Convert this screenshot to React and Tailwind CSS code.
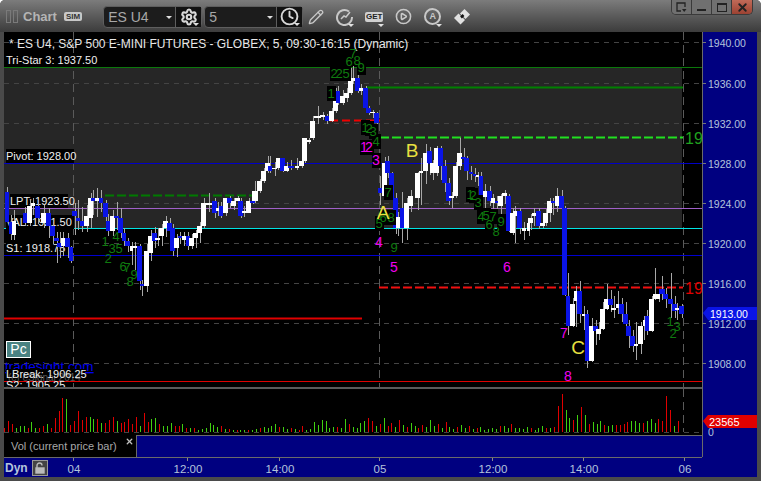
import { Pencil, Settings, Clock, CirclePlay, X } from "lucide-react";

const FONT = "font-['Liberation_Sans',Arial,sans-serif]";

// [x0, x1, top, bottom, color, wickTop, wickBottom]
const candles = [
  [5, 9, 192, 222, "b", 187, 222], [9, 12, 222, 234, "b", 215, 240], [12, 16, 221, 235, "w", 210, 240],
  [23, 27, 213, 223, "b", 207, 226], [27, 32, 206, 223, "w", 199, 226], [31, 35, 203, 206, "w", 198, 215],
  [35, 40, 206, 218, "b", 200, 224], [41, 46, 213, 223, "w", 205, 228], [46, 51, 213, 226, "b", 208, 238],
  [50, 55, 226, 236, "b", 222, 244], [54, 59, 238, 241, "b", 232, 263], [57, 62, 243, 247, "b", 232, 258],
  [61, 65, 238, 246, "w", 232, 256], [65, 70, 238, 247, "b", 233, 258], [69, 73, 247, 261, "b", 246, 263],
  [72, 77, 211, 216, "b", 203, 235], [76, 80, 218, 221, "b", 200, 230], [80, 84, 221, 226, "b", 207, 232],
  [84, 89, 216, 226, "w", 205, 232], [88, 93, 198, 218, "w", 193, 228], [91, 95, 198, 201, "b", 190, 215],
  [95, 99, 198, 201, "w", 188, 217], [99, 103, 198, 203, "b", 190, 212], [103, 108, 203, 217, "b", 200, 230],
  [106, 110, 221, 231, "b", 214, 236], [110, 115, 216, 231, "w", 210, 236], [114, 119, 216, 218, "b", 202, 230],
  [118, 123, 218, 233, "b", 208, 238], [122, 126, 233, 241, "b", 228, 246], [125, 130, 241, 246, "b", 238, 252],
  [130, 133, 246, 251, "w", 242, 265], [133, 137, 246, 248, "w", 242, 270], [137, 142, 246, 281, "b", 244, 290],
  [140, 144, 284, 286, "b", 280, 296], [144, 149, 251, 286, "w", 244, 292], [148, 153, 236, 253, "w", 230, 261],
  [152, 157, 233, 241, "b", 227, 248], [155, 160, 238, 240, "w", 228, 246], [159, 164, 228, 236, "w", 224, 246],
  [163, 168, 221, 228, "w", 216, 237], [167, 172, 223, 231, "b", 218, 240], [170, 175, 228, 251, "b", 224, 256],
  [174, 179, 238, 248, "w", 234, 257], [178, 182, 236, 238, "b", 232, 244], [182, 186, 236, 240, "w", 232, 246],
  [186, 190, 236, 246, "b", 232, 250], [189, 194, 238, 246, "w", 234, 249], [193, 198, 233, 238, "w", 230, 248],
  [197, 202, 226, 233, "w", 222, 243], [201, 206, 203, 226, "w", 198, 228], [206, 212, 203, 205, "w", 193, 212],
  [212, 217, 201, 213, "b", 198, 218], [216, 219, 208, 211, "w", 202, 216], [219, 223, 206, 216, "b", 202, 218],
  [223, 228, 198, 213, "w", 198, 216], [227, 232, 198, 203, "b", 196, 208], [231, 236, 201, 206, "w", 198, 210],
  [235, 240, 198, 201, "w", 196, 206], [238, 243, 201, 216, "b", 198, 218], [242, 246, 211, 213, "w", 206, 217],
  [246, 251, 201, 213, "w", 198, 213], [250, 255, 201, 203, "b", 198, 204], [252, 258, 191, 201, "w", 181, 203],
  [257, 262, 181, 191, "w", 179, 193], [261, 266, 171, 181, "w", 168, 183], [265, 270, 163, 171, "w", 156, 173],
  [268, 272, 166, 171, "b", 156, 173], [272, 277, 168, 169, "w", 162, 176], [276, 280, 158, 168, "w", 158, 170],
  [280, 285, 158, 171, "b", 158, 172], [284, 289, 166, 171, "w", 162, 172], [288, 294, 166, 168, "b", 160, 170],
  [295, 299, 166, 168, "w", 158, 170], [299, 304, 161, 166, "w", 158, 168], [302, 307, 138, 161, "w", 138, 163],
  [307, 311, 140, 142, "w", 138, 144], [310, 315, 121, 138, "w", 116, 140], [314, 321, 116, 118, "w", 106, 124],
  [320, 325, 115, 117, "w", 112, 120], [325, 329, 116, 121, "b", 114, 124], [329, 334, 111, 121, "w", 108, 122],
  [333, 338, 92, 111, "w", 88, 113], [336, 340, 91, 103, "b", 86, 105], [340, 345, 96, 103, "w", 90, 105],
  [344, 349, 93, 98, "w", 88, 102], [348, 353, 81, 93, "w", 68, 95], [351, 355, 78, 81, "w", 66, 84],
  [355, 360, 78, 91, "b", 72, 93], [359, 363, 88, 91, "w", 84, 95], [363, 368, 88, 108, "b", 86, 110],
  [366, 371, 108, 113, "b", 106, 115], [370, 375, 112, 113, "w", 110, 118], [374, 379, 113, 123, "b", 112, 126],
  [378, 382, 188, 193, "b", 176, 205], [382, 387, 163, 196, "w", 157, 200], [385, 390, 161, 173, "b", 156, 178],
  [389, 394, 173, 198, "b", 172, 200], [393, 398, 198, 228, "b", 193, 234], [396, 400, 217, 228, "w", 212, 236],
  [400, 404, 208, 228, "b", 192, 243], [404, 409, 203, 228, "w", 198, 240], [408, 413, 196, 206, "w", 190, 212],
  [415, 420, 173, 198, "w", 172, 210], [419, 423, 171, 173, "w", 158, 205], [423, 428, 153, 171, "w", 144, 184],
  [427, 432, 151, 163, "b", 147, 175], [430, 435, 163, 173, "w", 160, 180], [434, 439, 148, 173, "w", 146, 176],
  [438, 443, 148, 166, "b", 146, 180], [442, 447, 166, 183, "b", 160, 192], [446, 451, 183, 201, "b", 178, 205],
  [449, 454, 196, 198, "w", 192, 208], [453, 458, 166, 196, "w", 162, 198], [457, 462, 153, 166, "w", 138, 170],
  [461, 466, 157, 159, "b", 148, 165], [464, 469, 158, 171, "b", 156, 180], [469, 473, 172, 174, "b", 166, 180],
  [473, 476, 174, 176, "b", 168, 182], [476, 479, 175, 177, "w", 172, 186], [479, 483, 176, 197, "b", 172, 205],
  [483, 487, 191, 197, "w", 184, 208], [487, 492, 191, 201, "b", 186, 206], [491, 495, 198, 203, "w", 194, 210],
  [495, 498, 201, 203, "b", 196, 216], [498, 503, 196, 206, "w", 194, 220], [502, 507, 193, 196, "w", 190, 204],
  [506, 511, 196, 231, "b", 194, 232], [510, 515, 213, 233, "w", 208, 235], [513, 517, 211, 216, "w", 206, 243],
  [517, 522, 211, 228, "b", 208, 234], [522, 526, 228, 231, "w", 222, 240], [527, 530, 223, 231, "w", 220, 236],
  [528, 533, 218, 223, "w", 214, 230], [532, 536, 213, 216, "w", 208, 226], [536, 541, 211, 226, "b", 208, 229],
  [540, 545, 223, 226, "w", 220, 228], [543, 548, 213, 223, "w", 209, 226], [547, 552, 201, 213, "w", 198, 222],
  [551, 555, 201, 203, "b", 198, 215], [555, 559, 196, 206, "w", 188, 212], [559, 564, 196, 208, "b", 190, 212],
  [562, 567, 208, 295, "b", 206, 296], [566, 570, 296, 326, "b", 273, 335], [570, 575, 304, 326, "w", 298, 327],
  [574, 577, 291, 301, "w", 286, 327], [577, 582, 291, 314, "b", 281, 323], [582, 585, 314, 316, "w", 306, 330],
  [585, 589, 314, 361, "b", 310, 368], [589, 594, 326, 361, "w", 318, 362], [593, 598, 326, 331, "b", 320, 345],
  [596, 601, 329, 334, "w", 322, 340], [600, 605, 309, 329, "w", 302, 330], [604, 609, 299, 309, "w", 284, 310],
  [608, 613, 299, 305, "b", 290, 312], [611, 616, 308, 310, "w", 296, 318], [616, 619, 304, 308, "w", 291, 314],
  [619, 624, 304, 314, "b", 298, 322], [623, 628, 314, 324, "b", 302, 330], [626, 631, 326, 336, "b", 320, 348],
  [630, 635, 336, 346, "b", 330, 352], [634, 638, 344, 346, "w", 322, 360], [638, 643, 326, 344, "w", 322, 354],
  [643, 645, 320, 326, "w", 316, 340], [645, 649, 316, 331, "b", 310, 335], [649, 654, 299, 331, "w", 296, 332],
  [653, 657, 294, 299, "w", 268, 300], [657, 660, 294, 299, "w", 290, 302], [659, 665, 289, 294, "b", 276, 300],
  [663, 668, 294, 299, "b", 288, 308], [668, 673, 299, 304, "b", 273, 318], [672, 677, 304, 311, "b", 296, 318],
  [675, 679, 308, 310, "w", 303, 320], [679, 684, 306, 314, "b", 304, 318],
];

const vols = "r4 r11 r8 g4 g6 g6 r4 g10 g4 r4 r6 g8 r4 r14 r21 r34 g33 r7 r11 r21 r12 r15 g15 g13 r13 g9 r9 r12 r15 g11 r9 r10 r13 r8 r15 g6 r19 r10 g13 g14 r8 g6 g6 g9 r6 r6 g8 r4 g4 r4 g2 g3 g4 g9 g7 g5 r6 g3 r3 g2 r2 g2 g2 r2 g2 g3 r4 g5 g4 g6 g8 r5 g5 g3 r4 g3 r2 r6 g2 g3 g10 g7 g12 g11 g4 g5 r5 g4 g13 r8 g5 g4 g9 g11 r14 r11 g6 r8 g14 r6 r9 g5 r12 g7 r5 g9 g6 r4 r7 g5 g12 g6 r8 g4 r10 g5 g3 r5 g7 g4 r6 g3 r4 g5 g2 g3 g4 g3 r6 g6 g4 r8 g4 g4 g3 g5 r4 g2 g4 g6 r4 g4 r5 r26 r38 g22 g14 r12 g17 r25 g17 r8 g10 g8 g11 r7 g6 g7 r7 r7 r8 r10 g11 g11 g9 r9 g11 g13 g9 r13 r11 r36 r22 g6 r11".split(" ");

const gridYs = [42, 83, 123, 163, 203, 243, 283, 323, 363];
const prices = [[42, "1940.00"], [83, "1936.00"], [123, "1932.00"], [163, "1928.00"], [203, "1924.00"], [243, "1920.00"], [283, "1916.00"], [323, "1912.00"], [363, "1908.00"]];

const labels = [
  [4, 53, 92, "Tri-Star 3: 1937.50"],
  [6, 149, 68, "Pivot: 1928.00"],
  [10, 194, 58, "LPT: 1923.50"],
  [6, 215, 68, "VAL: 1921.50"],
  [6, 241, 58, "S1: 1918.75"],
];

const greens = [
  [353, 53, "7", 0], [349, 61, "6", 0], [357, 60, "8", 0], [361, 67, "9", 1], [334, 73, "2", 1], [339, 73, "2", 1], [346, 73, "5", 1],
  [331, 93, "1", 1], [365, 127, "1", 1], [369, 128, "2", 1], [373, 131, "3", 1], [376, 141, "4", 1],
  [388, 192, "7", 1], [379, 223, "5", 1], [383, 217, "6", 1], [391, 217, "8", 1], [394, 247, "9", 0],
  [470, 194, "1", 1], [473, 195, "2", 1], [478, 202, "3", 1], [481, 216, "4", 1], [486, 215, "5", 1], [489, 224, "6", 1], [493, 216, "7", 1], [501, 221, "9", 1], [496, 231, "8", 0],
  [105, 241, "1", 0], [116, 236, "4", 0], [112, 248, "3", 0], [119, 248, "5", 0], [108, 258, "2", 0], [123, 266, "6", 0], [127, 267, "7", 0], [134, 274, "9", 0], [130, 281, "8", 0],
  [670, 321, "1", 0], [677, 326, "3", 0], [673, 333, "2", 0],
];
const magentas = [[364, 147, "1", 1], [369, 147, "2", 1], [376, 160, "3", 1], [379, 242, "4", 0], [394, 267, "5", 0], [507, 267, "6", 0], [564, 333, "7", 0], [568, 376, "8", 0]];
const letters = [[383, 212, "A"], [412, 150, "B"], [578, 347, "C"]];

function HLine({ y, x1 = 4, x2 = 702, color, w = 1, dash }) {
  return <line x1={x1} x2={x2} y1={y + 0.5} y2={y + 0.5} stroke={color} strokeWidth={w} strokeDasharray={dash} />;
}

function PricePane() {
  return (
    <svg width="698" height="355" viewBox="4 32 698 355" className="block" fontFamily="Liberation Sans, Arial, sans-serif">
      <rect x="4" y="32" width="698" height="355" fill="#000" />
      <rect x="4" y="67" width="678" height="161" fill="#262626" />
      {gridYs.map((y) => <HLine key={y} y={y} color="#444" dash="5 5" />)}
      {[73, 379, 683].map((x) => <line key={x} x1={x + 0.5} x2={x + 0.5} y1="32" y2="387" stroke="#5a5a5a" strokeDasharray="8 5" />)}
      <HLine y={67} color="#0b780b" />
      <HLine y={87} x1={367} x2={683} color="#008000" w={2} />
      <HLine y={120} x1={330} x2={380} color="#f00000" w={2} dash="8 4" />
      <HLine y={137} x1={380} x2={683} color="#20e020" w={2} dash="9 3" />
      <HLine y={163} color="#0000c8" />
      <HLine y={195} x1={105} x2={252} color="#007a00" w={2} dash="9 3" />
      <HLine y={208} color="#a060c8" />
      <HLine y={228} color="#00e4e4" />
      <HLine y={255} color="#0000d0" />
      <HLine y={287} x1={379} x2={683} color="#f01010" w={2} dash="9 3" />
      <HLine y={318} x1={4} x2={362} color="#e00000" w={2} />
      <HLine y={381} color="#e00000" />
      <text x="685" y="144" fontSize="16" fill="#1fa01f">19</text>
      <text x="685" y="294" fontSize="16" fill="#e00000">19</text>
      <text x="9" y="48" fontSize="12" fill="#e8e8e8">* ES U4, S&amp;P 500 E-MINI FUTURES - GLOBEX, 5, 09:30-16:15 (Dynamic)</text>
      {labels.map(([x, y, w, t]) => (
        <g key={t}>
          <rect x={x} y={y} width={w} height="14" fill="#000" />
          <text x={x === 4 ? 6 : x} y={y + 11} fontSize="11" fill="#f0f0f0">{t}</text>
        </g>
      ))}
      {candles.map(([x0, x1, , , , wt, wb], i) => {
        const cx = Math.round((x0 + x1) / 2) + 0.5;
        return <line key={i} x1={cx} x2={cx} y1={wt} y2={wb} stroke="#a8a8a8" />;
      })}
      {candles.map(([x0, x1, top, bot, c], i) => (
        <rect key={i} x={x0} y={top} width={x1 - x0} height={bot - top} fill={c === "b" ? "#0a14e6" : "#fff"} />
      ))}
      {greens.map(([x, y, t, bg], i) => bg ? <rect key={i} x={x - 4} y={y - 7} width="9" height="15" fill="#000" /> : null)}
      {magentas.map(([x, y, t, bg], i) => bg ? <rect key={i} x={x - 4} y={y - 7} width="9" height="15" fill="#000" /> : null)}
      {greens.map(([x, y, t], i) => <text key={i} x={x} y={y + 5} fontSize="13" textAnchor="middle" fill="#0f7a0f">{t}</text>)}
      {magentas.map(([x, y, t], i) => <text key={i} x={x} y={y + 5} fontSize="14" textAnchor="middle" fill="#f000f0">{t}</text>)}
      {letters.map(([x, y, t]) => <text key={t} x={x} y={y + 7} fontSize="19" textAnchor="middle" fill="#e8e040">{t}</text>)}
      {/* pc box and stacked watermark labels in the lower corner */}
      <rect x="6.5" y="341.5" width="24" height="16" fill="#4a8282" stroke="#fff" />
      <text x="18.5" y="354" fontSize="14" textAnchor="middle" fill="#fff">Pc</text>
      <text x="5" y="371" fontSize="13.5" fill="#0000f0" textDecoration="underline">tradesight.com</text>
      <rect x="6" y="369" width="79" height="12" fill="#000" />
      <text x="8" y="381" fontSize="10" fill="#555">(c) eSignal 2014</text>
      <text x="6" y="378" fontSize="11" fill="#f0f0f0">LBreak: 1906.25</text>
      <text x="6" y="389" fontSize="11" fill="#f0f0f0">S2: 1905.25</text>
    </svg>
  );
}

function PriceAxis() {
  return (
    <svg width="55" height="445" viewBox="702 32 55 445" className="block" fontFamily="Liberation Sans, Arial, sans-serif">
      {prices.map(([y, t]) => (
        <g key={t}>
          <line x1="702" x2="706" y1={y + 0.5} y2={y + 0.5} stroke="#777" />
          <text x="708" y={y + 5} fontSize="10.5" fill="#b4c4dc">{t}</text>
        </g>
      ))}
      <polygon points="703,313 708,307 757,307 757,320 708,320" fill="#0a14e6" />
      <text x="710" y="318" fontSize="10.5" fill="#fff">1913.00</text>
      <polygon points="703,421 708,415 757,415 757,428 708,428" fill="#e00000" />
      <text x="709" y="426" fontSize="11" fill="#fff">23565</text>
      <text x="708" y="436" fontSize="10.5" fill="#b4c4dc">0</text>
    </svg>
  );
}

function VolumePane() {
  return (
    <svg width="698" height="46" viewBox="4 389 698 46" className="block">
      <rect x="4" y="389" width="698" height="46" fill="#000" />
      {vols.map((v, i) => {
        const h = Number(v.slice(1));
        const x = Math.round(4.4 + i * 3.87) + 0.5;
        return <line key={i} x1={x} x2={x} y1={432} y2={432 - h} stroke={v[0] === "r" ? "#e00000" : "#40d010"} />;
      })}
      <line x1="4" x2="702" y1="432.5" y2="432.5" stroke="#444" strokeDasharray="5 5" />
      <line x1="683.5" x2="683.5" y1="389" y2="432" stroke="#5a5a5a" strokeDasharray="8 5" />
    </svg>
  );
}

function TimeAxis() {
  const ticks = [[74, "04"], [188, "12:00"], [280, "14:00"], [380, "05"], [493, "12:00"], [584, "14:00"], [685, "06"]];
  return (
    <svg width="700" height="19" viewBox="0 458 700 19" className="absolute top-0 left-0" fontFamily="Liberation Sans, Arial, sans-serif">
      {ticks.map(([x, t], i) => (
        <g key={i}>
          <line x1={x - 0.5} x2={x - 0.5} y1="458" y2="461" stroke="#888" />
          <text x={x} y="473" fontSize="11.5" textAnchor="middle" fill="#b4c4dc">{t}</text>
        </g>
      ))}
    </svg>
  );
}

function Caret({ className }) {
  return <span className={`absolute border-x-[3px] border-t-[3px] border-x-transparent border-t-[#e0e0e0] ${className}`} />;
}

function Tool({ children, w = "w-[29px]", caret = true }) {
  return (
    <div className={`relative flex items-center justify-center h-[22px] ${w} text-[#c8c8c8]`}>
      {children}
      {caret && <Caret className="right-[5px] bottom-[1px]" />}
    </div>
  );
}

function Combo({ value, children }) {
  return (
    <div className="flex h-[22px] w-[99px] rounded-[4px] border border-[#5e5e5e] bg-[#1c1c1c]">
      <div className="relative flex-1 pl-[4px] text-[14px] leading-[20px] text-[#a8a8a8]">
        {value}
        <Caret className="right-[3px] top-[9px]" />
      </div>
      <div className="relative flex w-[26px] items-center justify-center border-l border-[#5e5e5e] bg-[#111] text-[#d8d8d8]">
        {children}
        <Caret className="right-[2px] bottom-[1px]" />
      </div>
    </div>
  );
}

export default function App() {
  return (
    <div className={`flex h-[481px] w-[761px] flex-col overflow-hidden rounded-t-[5px] bg-[#4a4a4a] ${FONT}`}>
      <div className="flex h-8 shrink-0 bg-gradient-to-b from-[#7c7c7c] to-[#3c3c3c]">
        <div className="flex items-center pt-[1px]">
          <div className="ml-[6px] flex gap-[2px]">
            <span className="h-[13px] w-[5px] border border-[#7a7a7a]" />
            <span className="h-[13px] w-[5px] border border-[#7a7a7a]" />
          </div>
          <span className="ml-[5px] text-[13px] font-bold text-[#b4b4b4]">Chart</span>
          <span className="ml-[7px] rounded-[2px] bg-[#c8c8c8] px-[2px] text-[8px] leading-[9px] font-bold text-[#333]">SIM</span>
          <div className="ml-[21px] flex gap-[2px]">
            <Combo value="ES U4"><Settings size={18} strokeWidth={2.8} /></Combo>
            <Combo value="5"><Clock size={19} strokeWidth={2.4} /></Combo>
          </div>
          <div className="-ml-[2px] flex">
            <Tool caret={false}><Pencil size={16} /></Tool>
            <Tool>
              <svg width="18" height="18" viewBox="0 0 18 18" fill="none" stroke="currentColor" strokeWidth="2">
                <path d="M13 3.5A7.5 7.5 0 1 0 16 9" />
                <path d="M5 11l3-3 2 1 4-5" strokeWidth="1.5" />
              </svg>
            </Tool>
            <Tool w="w-[30px]"><span className="rounded-[2px] bg-[#d0d0d0] px-[1px] text-[8px] leading-[10px] font-bold text-[#222]">GET</span></Tool>
            <Tool caret={false}><CirclePlay size={17} strokeWidth={2.2} /></Tool>
            <Tool>
              <div className="flex h-[17px] w-[17px] items-center justify-center rounded-full border-2 border-[#c8c8c8] text-[9px] font-bold">A</div>
            </Tool>
            <Tool caret={false}>
              <svg width="18" height="18" viewBox="0 0 18 18">
                <path d="M5.5 5.5l6.5 6.5-4.5 4.5L1 10z" fill="#e0e0e0" />
                <path d="M11.5 1l5.5 5.5-4.5 4.5L7 5.5z" fill="#e0e0e0" />
                <path d="M8 9.5l2.5-2.5" stroke="#111" strokeWidth="2.5" />
              </svg>
            </Tool>
          </div>
        </div>
        <div className="mr-2 ml-auto flex h-[15px] overflow-hidden rounded-b-[5px] border border-t-0 border-[#3a3a3a] text-[#222]">
          <div className="flex w-5 items-center justify-center border-r border-[#3a3a3a] bg-[#707070]">
            <svg width="11" height="11" viewBox="0 0 11 11" fill="none" stroke="#222" strokeWidth="1.3">
              <path d="M5 9H1V1h8v4" />
              <path d="M6 7h4.5L8.2 10z" fill="#222" stroke="none" />
            </svg>
          </div>
          <div className="flex w-5 items-end justify-center border-r border-[#3a3a3a] bg-[#707070] pb-[3px]"><span className="h-[2px] w-[9px] bg-[#222]" /></div>
          <div className="flex w-5 items-center justify-center border-r border-[#3a3a3a] bg-[#707070]"><span className="h-[9px] w-[10px] border border-t-2 border-[#222]" /></div>
          <div className="flex w-5 items-center justify-center bg-gradient-to-b from-[#c06a58] to-[#9c4232]"><X size={13} strokeWidth={3.5} /></div>
        </div>
      </div>

      <div className="flex flex-1 px-1 pb-1">
        <div className="flex w-[753px] bg-[#000080]">
          <div className="relative flex w-[698px] flex-col">
            <PricePane />
            <div className="h-[2px] bg-[#5a5a5a]" />
            <VolumePane />
            <div className="flex h-[22px]">
              <div className="relative flex w-[132px] items-center bg-black pl-[7px] text-[11px] text-[#a8a8a8]">
                Vol (current price bar)
                <X size={9} strokeWidth={3.5} className="absolute top-[2px] right-[2px] text-[#c0c0c0]" />
              </div>
              <div className="flex-1 border-t border-l border-[#6a6a6a] bg-[#000080]" />
            </div>
            <div className="h-[1px] bg-[#6a6a6a]" />
            <div className="relative flex h-[19px] items-center bg-[#000080]">
              <div className="-ml-[4px] w-[700px] h-[19px] absolute top-0 left-0"><TimeAxis /></div>
              <span className="relative ml-[1px] text-[12px] font-bold text-[#b4c4dc]">Dyn</span>
              <div className="relative ml-[4px] flex h-[16px] w-[16px] items-center justify-center border border-[#999] bg-[#444]">
                <svg width="12" height="12" viewBox="0 0 12 12" fill="none" stroke="#bbb" strokeWidth="1.4">
                  <path d="M3 6V3.5a2.5 2.5 0 0 1 5 0" />
                  <rect x="2" y="6" width="8" height="5" fill="#bbb" />
                </svg>
              </div>
            </div>
          </div>
          <div className="border-l border-[#6a6a6a] h-[425px]" />
          <div className="-ml-[1px]"><PriceAxis /></div>
        </div>
      </div>
    </div>
  );
}
